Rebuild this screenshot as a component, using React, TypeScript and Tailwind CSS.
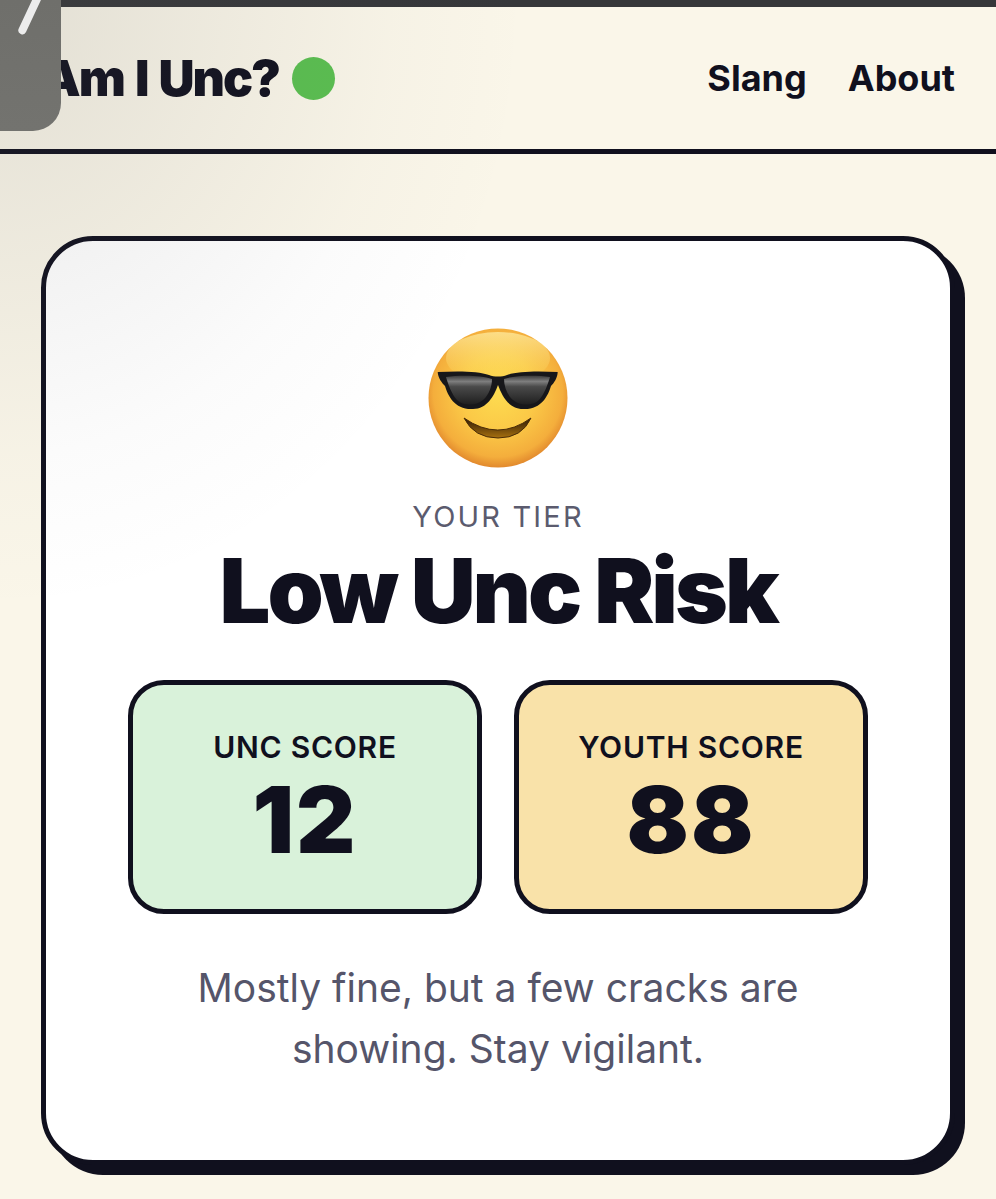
import React from "react";

function CoolEmoji() {
  return (
    <svg width="142" height="142" viewBox="0 0 142 142" className="block">
      <defs>
        <radialGradient id="face" cx="50%" cy="46%" r="54%">
          <stop offset="0%" stopColor="#fddc50" />
          <stop offset="50%" stopColor="#fbc947" />
          <stop offset="86%" stopColor="#f4ae3c" />
          <stop offset="100%" stopColor="#e2892d" />
        </radialGradient>
        <linearGradient id="shine" x1="0" y1="0" x2="0" y2="1">
          <stop offset="0%" stopColor="#fff0a8" stopOpacity="0.7" />
          <stop offset="100%" stopColor="#fde566" stopOpacity="0" />
        </linearGradient>
        <linearGradient id="lens" x1="0" y1="0" x2="0" y2="1">
          <stop offset="0%" stopColor="#3a3a3a" />
          <stop offset="20%" stopColor="#7e7e7e" />
          <stop offset="38%" stopColor="#4a4a4a" />
          <stop offset="100%" stopColor="#1f1f1f" />
        </linearGradient>
        <linearGradient id="mouth" x1="0" y1="0" x2="0" y2="1">
          <stop offset="0%" stopColor="#2f1a06" />
          <stop offset="100%" stopColor="#a7700f" />
        </linearGradient>
      </defs>
      <circle cx="71" cy="70" r="69.5" fill="url(#face)" />
      <ellipse cx="71" cy="30" rx="52" ry="26" fill="url(#shine)" />
      <path d="M10.7 44 C 30 43 52 43 62 47 C 67 49 75 49 80 47 C 90 43 112 43 130.7 44 C 130.5 50 127 55 124 58 C 121 68 114 82 96 81 C 82 81 75 68 71 57 C 67 68 60 81 46 81 C 28 82 21 68 18 58 C 15 55 11 50 10.7 44 Z" fill="#17171a" />
      <path d="M19 49 C 32 47 54 47 65 51 C 65 58 62 67 56 72 C 49 78 36 78 30 72 C 25 67 21 56 19 49 Z" fill="url(#lens)" />
      <path d="M123 49 C 110 47 88 47 77 51 C 77 58 80 67 86 72 C 93 78 106 78 112 72 C 117 67 121 56 123 49 Z" fill="url(#lens)" />
      <path d="M37 90 Q 71 114 104 90 Q 95 110 71 110 Q 47 110 37 90 Z" fill="url(#mouth)" stroke="#4a2c08" strokeWidth="1" strokeLinejoin="round" />
    </svg>
  );
}

function ScoreBox({ label, value, bg }: { label: string; value: string; bg: string }) {
  return (
    <div className={`flex h-[234px] flex-1 flex-col items-center rounded-[36px] border-[5px] border-[#10101e] pt-[44px] ${bg}`}>
      <span className="text-[30px] leading-[36px] font-semibold tracking-[0.025em]">{label}</span>
      <span className="mt-[9px] text-[92px] leading-[92px] font-black tracking-[2px]">{value}</span>
    </div>
  );
}

export default function App() {
  return (
    <div
      className="relative h-[1199px] w-[996px] overflow-hidden bg-[#faf6e9] text-[#10101e]"
      style={{ fontFamily: "Inter, 'Liberation Sans', sans-serif" }}
    >
      <div className="h-[7px] bg-[#36373a]" />

      <header className="flex h-[147px] items-center justify-between border-b-[5px] border-[#10101e] px-[41px]">
        <div className="flex items-center gap-[13px]">
          <span className="text-[50px] leading-none font-black tracking-[-0.04em] [word-spacing:3px]">Am I Unc?</span>
          <span className="h-[43px] w-[43px] rounded-full bg-[#5abf50]" />
        </div>
        <nav className="flex items-center gap-[41px] text-[36px] leading-none font-bold">
          <span>Slang</span>
          <span>About</span>
        </nav>
      </header>

      <main className="px-[41px] pt-[82px]">
        <section className="flex h-[929px] flex-col items-center rounded-[52px] border-[5px] border-[#10101e] bg-white px-[82px] pt-[87px] shadow-[10px_10px_0_#10101e]">
          <CoolEmoji />
          <p className="mt-[29px] text-[29px] leading-[36px] tracking-[0.075em] text-[#5b5b6e]">YOUR TIER</p>
          <h1 className="mt-[2px] text-[90px] leading-[108px] font-black tracking-[-3px]">Low Unc Risk</h1>
          <div className="mt-[35px] flex w-full gap-[32px]">
            <ScoreBox label="UNC SCORE" value="12" bg="bg-[#d9f2da]" />
            <ScoreBox label="YOUTH SCORE" value="88" bg="bg-[#f9e2a9]" />
          </div>
          <p className="mt-[43px] text-center text-[39px] leading-[61px] text-[#55556a]">
            Mostly fine, but a few cracks are
            <br />
            showing. Stay vigilant.
          </p>
        </section>
      </main>

      {/* shadow cast over the top left of the page */}
      <div className="pointer-events-none absolute top-0 left-0 h-[720px] w-[620px] bg-[radial-gradient(ellipse_at_top_left,rgba(90,90,90,0.15),rgba(90,90,90,0.08)_25%,rgba(90,90,90,0.025)_45%,rgba(90,90,90,0)_60%)]" />

      <div className="absolute top-0 left-0 h-[131px] w-[61px] rounded-br-[28px] bg-gradient-to-b from-[#6f6f6b] to-[#73736f]">
        <div className="absolute top-[-8px] left-[26px] h-[44px] w-[8px] rotate-[25deg] rounded-full bg-[#ececec]" />
      </div>
    </div>
  );
}
